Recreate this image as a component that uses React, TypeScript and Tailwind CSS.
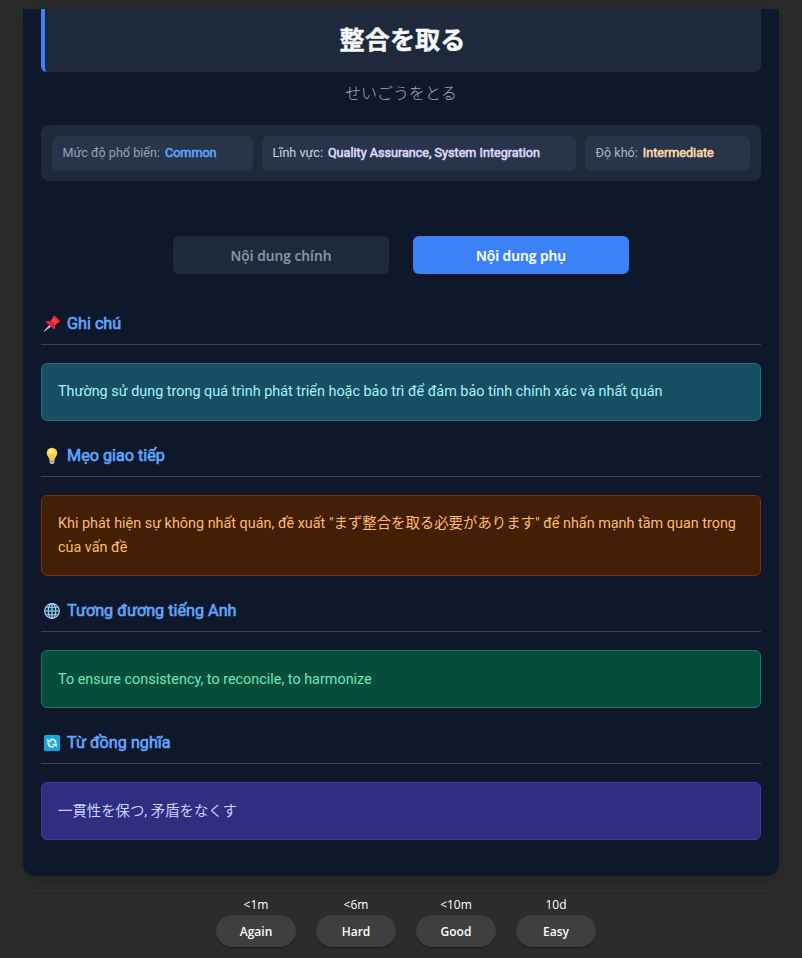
import type { ReactNode } from "react";

const roboto = "font-[Roboto,'Noto_Sans_CJK_JP',sans-serif]";
const ui = "font-['Open_Sans','Noto_Sans',sans-serif]";

function PinIcon() {
  return (
    <svg width="18" height="18" viewBox="0 0 18 18">
      <path d="M1.2 16.3 6.2 10.4 7.6 11.6Z" fill="#c9d3de" stroke="#c9d3de" strokeWidth="0.7" />
      <path d="M10.3 1.2c.5-.7 1.2-.7 1.8-.1l4.6 4.5c.6.6.5 1.4-.2 1.7l-1.5.4-3 3.1.1 2.7c0 .9-.9 1.2-1.5.6L3.4 7.6c-.6-.7-.3-1.4.5-1.5l3.1.1 2.9-3Z" fill="#e8253a" />
      <path d="m10.5 2.2 5.1 5.1-3.4 2.5-4.3-4.3Z" fill="#f23a4a" />
      <path d="m7.4 6.4 4 4" stroke="#b5152d" strokeWidth="1" />
    </svg>
  );
}

function BulbIcon() {
  return (
    <svg width="18" height="18" viewBox="0 0 18 18">
      <path d="M9 .8a5.3 5.3 0 0 0-5.3 5.3c0 2.4 1.5 3.4 2.3 5.2l.6 2h4.8l.6-2c.8-1.8 2.3-2.8 2.3-5.2A5.3 5.3 0 0 0 9 .8Z" fill="#fbd548" />
      <ellipse cx="8" cy="4.5" rx="2.6" ry="2.2" fill="#fff09a" />
      <path d="m7.3 8 .7 4.8h2l.7-4.8" fill="none" stroke="#eda52c" strokeWidth=".7" />
      <path d="M6.6 13h4.8v2.5L10.2 17H7.8l-1.2-1.5Z" fill="#b9bdc6" />
      <path d="M6.7 14.6h4.6" stroke="#7c8290" strokeWidth=".7" />
    </svg>
  );
}

function GlobeIcon() {
  return (
    <svg width="18" height="18" viewBox="0 0 18 18" fill="none" stroke="#a5d3f8" strokeWidth="1.1">
      <circle cx="9" cy="9" r="7.4" fill="#173653" />
      <ellipse cx="9" cy="9" rx="3.8" ry="7.4" />
      <path d="M9 1.6v14.8M1.6 9h14.8M2.8 5.2h12.4M2.8 12.8h12.4" />
    </svg>
  );
}

function SyncIcon() {
  return (
    <svg width="18" height="18" viewBox="0 0 18 18">
      <rect x="1" y="1" width="16" height="16" rx="1.6" fill="#12a5e6" />
      <g fill="none" stroke="#f4fbff" strokeWidth="1.8">
        <path d="M7.2 5.6c3-.9 5.5.3 5.6 3.6" />
        <path d="M10.8 12.4c-3 .9-5.5-.3-5.6-3.6" />
      </g>
      <path d="M4.3 4.4v3.9h4.6ZM13.7 13.6V9.7H9.1Z" fill="#f4fbff" />
    </svg>
  );
}

function MetaItem({ label, value, box, labelColor, valueColor }: { label: string; value: string; box: string; labelColor: string; valueColor: string }) {
  return (
    <div className={`flex h-[35px] items-center rounded-md bg-[#273449] pl-[10.5px] text-[12.6px] whitespace-nowrap ${box}`}>
      <span className={labelColor}>{label}</span>
      <span className={`ml-[5px] [-webkit-text-stroke:0.6px] ${valueColor}`}>{value}</span>
    </div>
  );
}

function Section({ icon, title, boxStyle, textStyle, children }: { icon: ReactNode; title: string; boxStyle: string; textStyle: string; children: ReactNode }) {
  return (
    <section>
      <h2 className="flex h-[42px] items-center border-b border-[#334155] pl-[2px] text-[16.2px] leading-[20px] text-[#60a5fa]">
        {icon}
        <span className="ml-[6px] [-webkit-text-stroke:0.65px]">{title}</span>
      </h2>
      <div className={`mt-[18px] rounded-md border px-[16px] text-[14.4px] leading-[24px] ${boxStyle}`}>
        <p className={`whitespace-nowrap ${textStyle}`}>{children}</p>
      </div>
    </section>
  );
}

function Answer({ time, label }: { time: string; label: string }) {
  return (
    <div className="flex w-20 flex-col items-center">
      <span className="h-[21px] text-[12px] leading-[21px] text-white">{time}</span>
      <button className="h-8 w-20 rounded-full bg-[#3f3f3f] pt-[2px] text-[12px] font-semibold text-[#fcfcfc] shadow-[0_1px_1px_#191919]">{label}</button>
    </div>
  );
}

export default function App() {
  return (
    <div className={`flex h-[958px] w-[802px] flex-col overflow-hidden bg-[#2c2c2c] pt-[9px] ${roboto}`}>
      <main className="mx-[23px] h-[867px] shrink-0 rounded-b-xl bg-[#0f172a] px-[18px] shadow-[0_2px_14px_rgba(0,0,0,0.25)]">
        <h1 className="flex h-[63px] items-center justify-center rounded-b-md border-l-4 border-[#3b82f6] bg-[#1e293b] pr-[1px] text-[25.2px] font-bold text-[#f8fafc] [-webkit-text-stroke:0.4px]">整合を取る</h1>
        <p className="h-[53px] pt-[10px] text-center text-[16px] leading-[24px] font-light text-[#a0aec0]">せいごうをとる</p>
        <div className="flex h-14 items-center rounded-lg bg-[#1e293b] pl-[11px]">
          <MetaItem label="Mức độ phổ biến:" value="Common" box="w-[201px]" labelColor="text-[#94a3b8]" valueColor="text-[#60a5fa]" />
          <MetaItem label="Lĩnh vực:" value="Quality Assurance, System Integration" box="ml-[9px] w-[314px]" labelColor="text-[#cbd5e1]" valueColor="text-[#ddd6fe]" />
          <MetaItem label="Độ khó:" value="Intermediate" box="ml-[9px] w-[165px]" labelColor="text-[#a9b8c9]" valueColor="text-[#fed7aa]" />
        </div>
        <div className={`mt-[55px] flex h-[38px] justify-center gap-6 text-[13.8px] font-semibold ${ui}`}>
          <button className="w-[216px] rounded-md bg-[#1e293b] pt-[3px] text-[#8694a9] [-webkit-text-stroke:0.2px]">Nội dung chính</button>
          <button className="w-[216px] rounded-md bg-[#3b82f6] pt-[3px] text-white [-webkit-text-stroke:0.2px]">Nội dung phụ</button>
        </div>
        <div className="mt-[29px] flex flex-col gap-[14px]">
          <Section icon={<PinIcon />} title="Ghi chú" boxStyle="h-[58px] border-[#24707f] bg-[#164e63] pt-[16px]" textStyle="text-[#a5f3fc]">
            Thường sử dụng trong quá trình phát triển hoặc bảo trì để đảm bảo tính chính xác và nhất quán
          </Section>
          <Section icon={<BulbIcon />} title="Mẹo giao tiếp" boxStyle="h-[81px] border-[#7c2d12] bg-[#431f06] pt-[16px]" textStyle="text-[#fdba74]">
            Khi phát hiện sự không nhất quán, đề xuất "まず整合を取る必要があります" để nhấn mạnh tầm quan trọng
            <br />
            của vấn đề
          </Section>
          <Section icon={<GlobeIcon />} title="Tương đương tiếng Anh" boxStyle="h-[58px] border-[#157a5e] bg-[#064e3b] pt-[17px]" textStyle="text-[#6ee7b7]">
            To ensure consistency, to reconcile, to harmonize
          </Section>
          <Section icon={<SyncIcon />} title="Từ đồng nghĩa" boxStyle="h-[58px] border-[#4338a8] bg-[#312e81] pt-[17px]" textStyle="text-[#c7d2fe]">
            一貫性を保つ, 矛盾をなくす
          </Section>
        </div>
      </main>
      <footer className={`mx-[31px] mt-[17px] flex justify-center gap-5 border-t border-[#242424] pl-[10px] ${ui}`}>
        <Answer time="<1m" label="Again" />
        <Answer time="<6m" label="Hard" />
        <Answer time="<10m" label="Good" />
        <Answer time="10d" label="Easy" />
      </footer>
    </div>
  );
}
